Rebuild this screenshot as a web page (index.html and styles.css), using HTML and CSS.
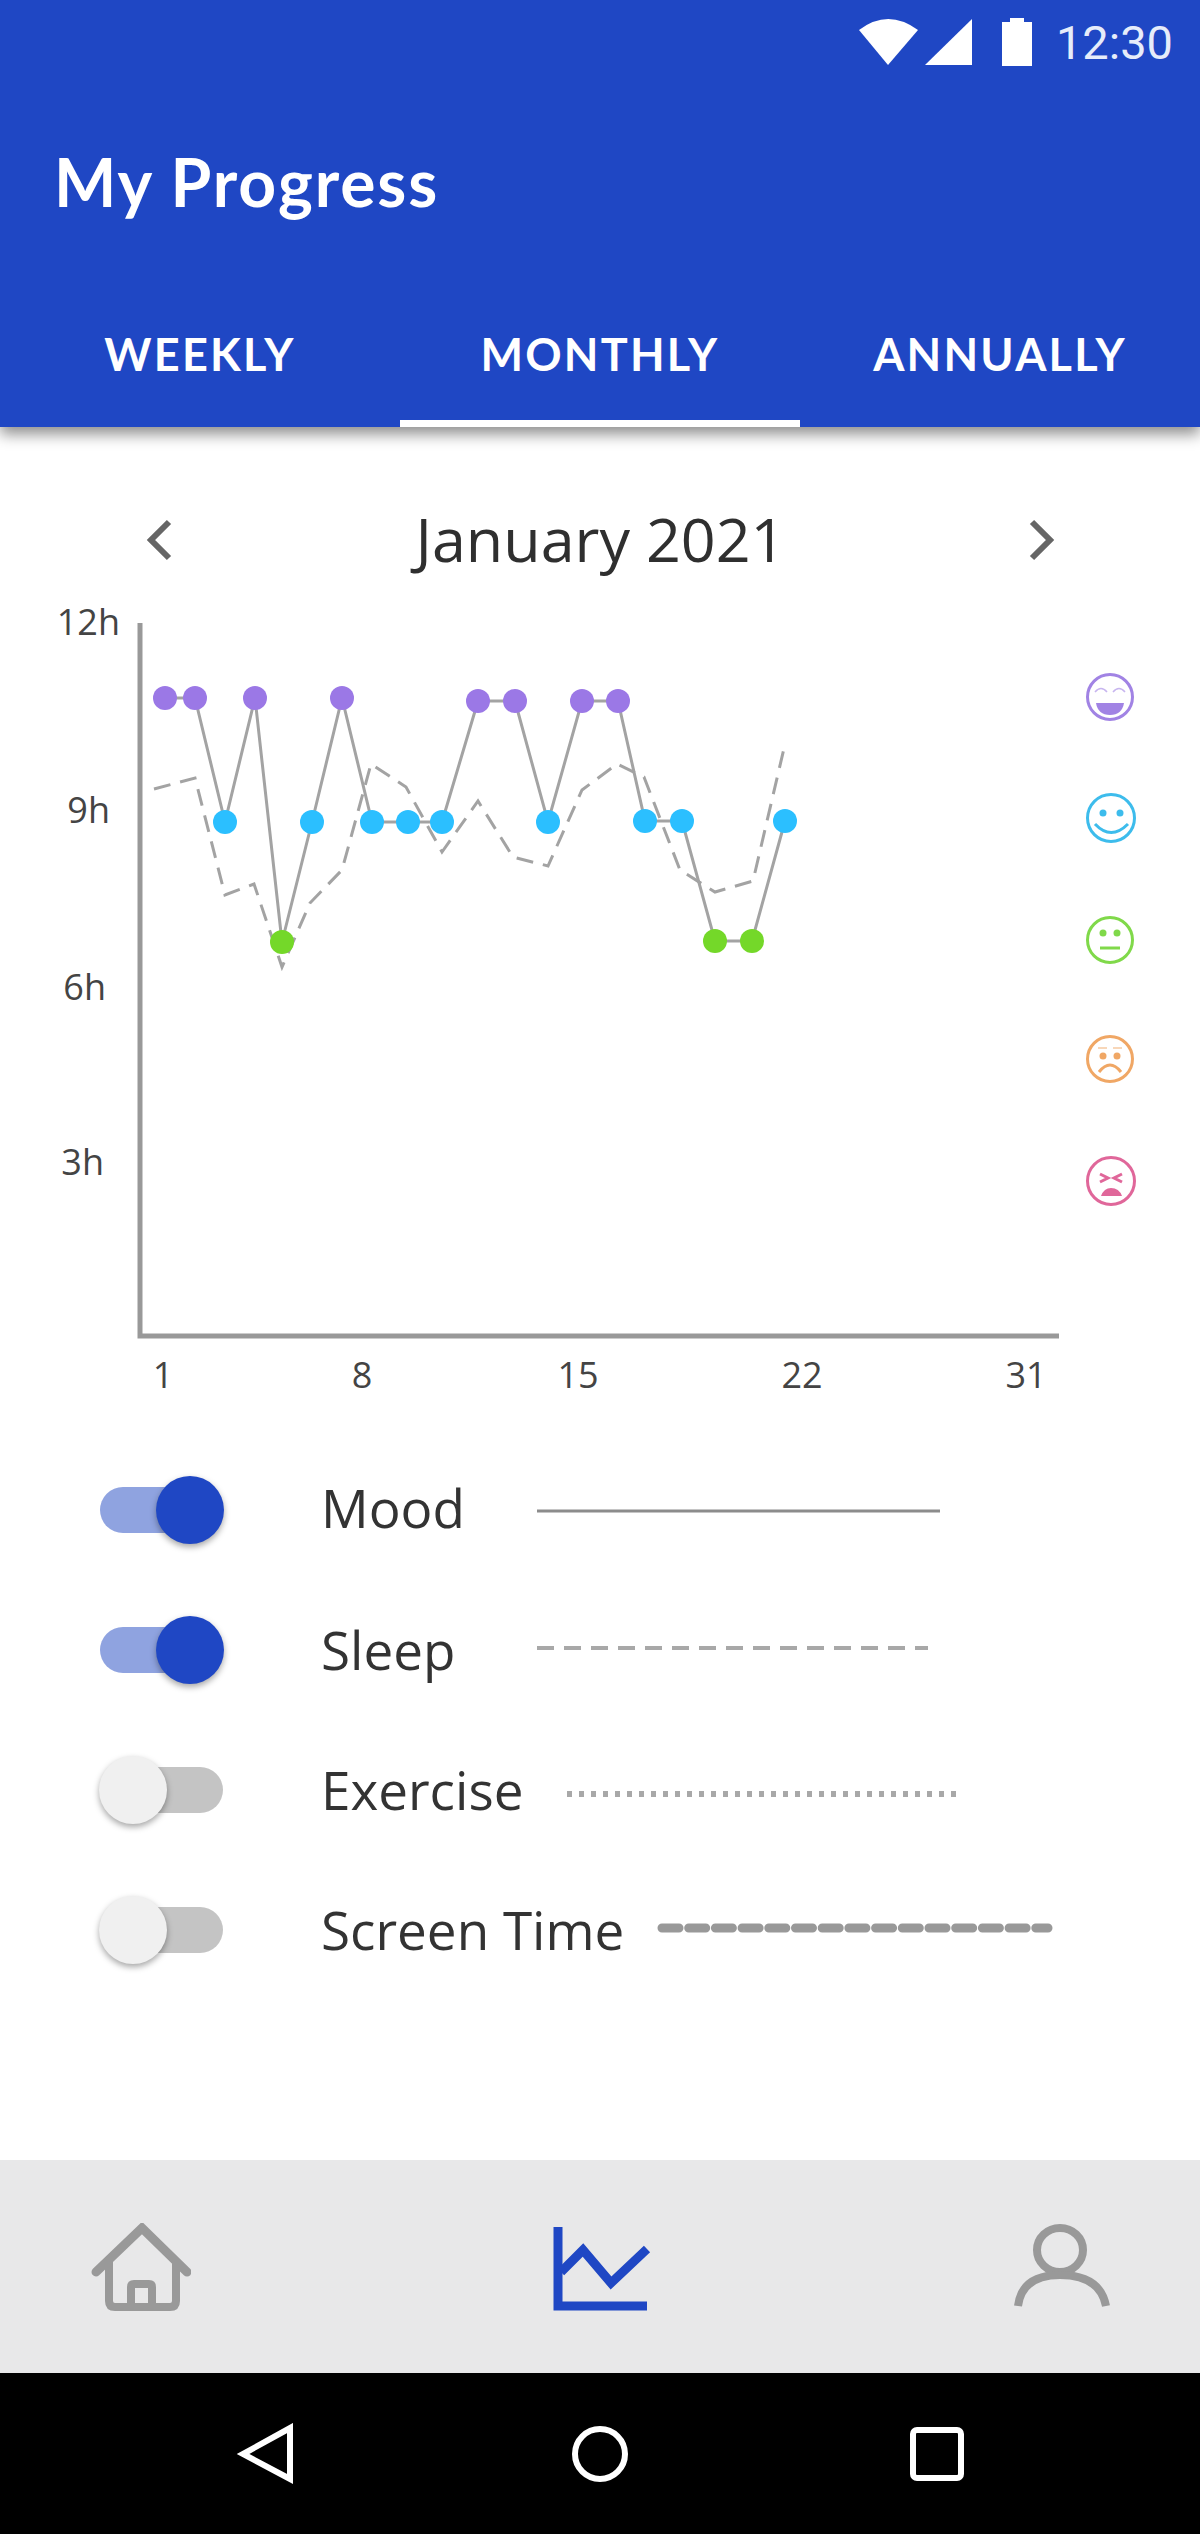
FILE: index.html
```html
<!DOCTYPE html>
<html lang="en">
<head>
    <meta charset="UTF-8">
    <meta name="viewport" content="width=device-width, initial-scale=1.0">
    <title>My Progress</title>
    <link rel="stylesheet" href="styles.css">
</head>
<body>
<div class="phone">

    <header class="appbar">
        <div class="statusbar">
            <svg class="status-icons" width="173" height="50" viewBox="857 15 173 50">
                <path d="M857 28 Q886 6 916 28 L886 63 Z"/>
                <path d="M923 63 L970 17 V63 Z"/>
                <path d="M1000 20 H1008 V16 H1022 V20 H1030 V64 H1000 Z"/>
            </svg>
            <span class="clock">12:30</span>
        </div>
        <h1 class="title">My Progress</h1>
        <nav class="tabs">
            <a class="tab">WEEKLY</a>
            <a class="tab tab-active">MONTHLY</a>
            <a class="tab">ANNUALLY</a>
        </nav>
    </header>

    <main class="content">
        <div class="month-nav">
            <svg class="chevron" width="27" height="42" viewBox="0 0 27 42"><path d="M23 3 L5 21 L23 39"/></svg>
            <span class="month-label">January 2021</span>
            <svg class="chevron" width="27" height="42" viewBox="0 0 27 42"><path d="M4 3 L22 21 L4 39"/></svg>
        </div>

        <!-- chart coordinates are the page coordinates -->
        <svg class="chart" width="1200" height="815" viewBox="0 585 1200 815">
            <g class="axis-label">
                <text x="120" y="635" text-anchor="end">12h</text>
                <text x="110" y="823" text-anchor="end">9h</text>
                <text x="106" y="1000" text-anchor="end">6h</text>
                <text x="104" y="1175" text-anchor="end">3h</text>
                <text x="163" y="1388" text-anchor="middle">1</text>
                <text x="362" y="1388" text-anchor="middle">8</text>
                <text x="578" y="1388" text-anchor="middle">15</text>
                <text x="802" y="1388" text-anchor="middle">22</text>
                <text x="1026" y="1388" text-anchor="middle">31</text>
            </g>
            <path class="axis" d="M140 623 V1336 H1059"/>

            <polyline class="sleep-line" points="154,789 195,778 225,895 254,884 282,967 310,903 342,870 371,764 406,787 442,852 478,801 513,857 548,866 582,790 617,764 644,777 680,870 715,892 753,881 785,744"/>
            <polyline class="mood-line" points="165,698 195,698 225,822 255,698 282,942 312,822 342,698 372,822 408,822 442,822 478,701 515,701 548,822 582,701 618,701 645,821 682,821 715,941 752,941 785,821"/>

            <g class="dots-great">
                <circle cx="165" cy="698" r="12"/><circle cx="195" cy="698" r="12"/>
                <circle cx="255" cy="698" r="12"/><circle cx="342" cy="698" r="12"/>
                <circle cx="478" cy="701" r="12"/><circle cx="515" cy="701" r="12"/>
                <circle cx="582" cy="701" r="12"/><circle cx="618" cy="701" r="12"/>
            </g>
            <g class="dots-good">
                <circle cx="225" cy="822" r="12"/><circle cx="312" cy="822" r="12"/>
                <circle cx="372" cy="822" r="12"/><circle cx="408" cy="822" r="12"/>
                <circle cx="442" cy="822" r="12"/><circle cx="548" cy="822" r="12"/>
                <circle cx="645" cy="821" r="12"/><circle cx="682" cy="821" r="12"/>
                <circle cx="785" cy="821" r="12"/>
            </g>
            <g class="dots-okay">
                <circle cx="282" cy="942" r="12"/><circle cx="715" cy="941" r="12"/>
                <circle cx="752" cy="941" r="12"/>
            </g>

            <g class="face face-great" transform="translate(1110 697)">
                <circle class="ring" r="22.5"/>
                <path class="faint" d="M-15 -5 Q-9 -12 -3 -5 M3 -5 Q9 -12 15 -5"/>
                <path class="fill" d="M-14 6 H14 Q12 18 0 18 Q-12 18 -14 6 Z"/>
            </g>
            <g class="face face-good" transform="translate(1111 818)">
                <circle class="ring" r="23.5"/>
                <circle class="fill" cx="-8" cy="-5" r="3.5"/>
                <circle class="fill" cx="9" cy="-5" r="3.5"/>
                <path class="thin" d="M-16 6 Q0 23 17 6"/>
            </g>
            <g class="face face-okay" transform="translate(1110 940)">
                <circle class="ring" r="22.5"/>
                <circle class="fill" cx="-7" cy="-7" r="3.5"/>
                <circle class="fill" cx="7" cy="-7" r="3.5"/>
                <path class="thin" d="M-10 8 H10"/>
            </g>
            <g class="face face-bad" transform="translate(1110 1059)">
                <circle class="ring" r="22.5"/>
                <path class="faint" d="M-12 -11 H-3 M3 -11 H12"/>
                <circle class="fill" cx="-7" cy="-3" r="3.5"/>
                <circle class="fill" cx="7" cy="-3" r="3.5"/>
                <path class="thin" d="M-11 13 Q0 -1 11 13"/>
            </g>
            <g class="face face-awful" transform="translate(1111 1181)">
                <circle class="ring" r="23.5"/>
                <path class="thin" d="M-11 -7 L-3 -3 L-11 1 M11 -7 L3 -3 L11 1"/>
                <path class="fill" d="M-10 15 Q-7 7 0 7 Q8 7 11 15 Z"/>
            </g>
        </svg>

        <ul class="legend">
            <li class="legend-row">
                <span class="toggle toggle-on"><span class="knob"></span></span>
                <span class="legend-label label-mood">Mood</span>
                <svg class="legend-line line-mood" width="403" height="12"><line x1="0" y1="6" x2="403" y2="6"/></svg>
            </li>
            <li class="legend-row">
                <span class="toggle toggle-on"><span class="knob"></span></span>
                <span class="legend-label label-sleep">Sleep</span>
                <svg class="legend-line line-sleep" width="391" height="12"><line x1="0" y1="6" x2="391" y2="6"/></svg>
            </li>
            <li class="legend-row">
                <span class="toggle"><span class="knob"></span></span>
                <span class="legend-label label-exercise">Exercise</span>
                <svg class="legend-line line-exercise" width="395" height="12"><line x1="0" y1="6" x2="395" y2="6"/></svg>
            </li>
            <li class="legend-row">
                <span class="toggle"><span class="knob"></span></span>
                <span class="legend-label label-screen">Screen Time</span>
                <svg class="legend-line line-screen" width="396" height="12"><line x1="5" y1="6" x2="391" y2="6"/></svg>
            </li>
        </ul>
    </main>

    <nav class="bottom-nav">
        <svg class="nav-icon" width="100" height="88" viewBox="0 0 100 88">
            <path class="roof" d="M5 49 L51 5 L96 49"/>
            <path d="M18 38 V78 Q18 84 24 84 H79 Q85 84 85 78 V38"/>
            <path d="M40 84 V64 Q40 61 43 61 H58 Q61 61 61 64 V84"/>
        </svg>
        <svg class="nav-icon nav-icon-active" width="100" height="88" viewBox="0 0 100 88">
            <path d="M7 4 V83 H96"/>
            <path d="M10 49 L32 27 L60 60 L96 26"/>
        </svg>
        <svg class="nav-icon" width="100" height="88" viewBox="0 0 100 88">
            <ellipse cx="49" cy="27" rx="23" ry="22"/>
            <path d="M7 83 Q11 52 49 52 Q89 52 95 83"/>
        </svg>
    </nav>

    <nav class="system-nav">
        <svg width="60" height="62" viewBox="0 0 60 62"><path d="M54 5 V56 L7 31 Z"/></svg>
        <svg width="60" height="62" viewBox="0 0 60 62"><circle cx="28" cy="31" r="25"/></svg>
        <svg width="60" height="62" viewBox="0 0 60 62"><rect x="6" y="7" width="48" height="48" rx="4"/></svg>
    </nav>

</div>
</body>
</html>
```

FILE: styles.css
```css
* {
    box-sizing: border-box;
}
body {
    margin: 0;
    background-color: #ffffff;
    font-family: "Open Sans", sans-serif;
    color: #333333;
}
.phone {
    width: 1200px;
    height: 2534px;
    display: flex;
    flex-direction: column;
    overflow: hidden;
}

/* app bar */
.appbar {
    position: relative;
    z-index: 1;
    background-color: #1f47c4;
    color: #ffffff;
    box-shadow: 0 7px 14px rgba(0, 0, 0, 0.45);
}
.statusbar {
    height: 84px;
    display: flex;
    justify-content: flex-end;
    align-items: center;
    padding-right: 27px;
}
.status-icons {
    fill: #ffffff;
}
.clock {
    margin-left: 24px;
    font-family: Roboto, sans-serif;
    font-size: 47px;
    color: #e6ecfa;
}
.title {
    height: 196px;
    margin: 0;
    padding: 0 0 2px 54px;
    display: flex;
    align-items: center;
    font-family: Lato, sans-serif;
    font-size: 66px;
    font-weight: 700;
    letter-spacing: 1.9px;
}
.tabs {
    display: flex;
}
.tab {
    flex: 1;
    height: 147px;
    display: flex;
    align-items: center;
    justify-content: center;
    padding-top: 7px;
    border-bottom: 7px solid transparent;
    font-family: Lato, sans-serif;
    font-size: 45px;
    font-weight: 700;
    letter-spacing: 2.2px;
}
.tab-active {
    border-bottom-color: #ffffff;
}

/* month + chart */
.content {
    flex: 1;
}
.month-nav {
    height: 158px;
    padding: 68px 145px 0 146px;
    display: flex;
    justify-content: space-between;
    align-items: center;
}
.chevron path {
    fill: none;
    stroke: #666666;
    stroke-width: 6;
}
.month-label {
    margin-bottom: 4px;
    font-size: 61px;
    color: #2f2f2f;
}
.chart {
    display: block;
}
.axis-label {
    font-family: "Open Sans", sans-serif;
    font-size: 36px;
    fill: #444444;
}
.axis {
    fill: none;
    stroke: #999999;
    stroke-width: 5;
}
.mood-line, .sleep-line {
    fill: none;
    stroke: #a3a3a3;
    stroke-width: 3;
}
.sleep-line {
    stroke-dasharray: 17 10;
}
.dots-great { fill: #9b78e6; }
.dots-good { fill: #2bbfff; }
.dots-okay { fill: #74d829; }

.face { --face: #999999; }
.face-great { --face: #a183e4; }
.face-good { --face: #3dbcec; }
.face-okay { --face: #80d94a; }
.face-bad { --face: #f0a765; }
.face-awful { --face: #e0679a; }
.face .ring, .face .thin, .face .faint {
    fill: none;
    stroke: var(--face);
    stroke-width: 3;
}
.face .faint {
    stroke-width: 1.5;
    opacity: 0.6;
}
.face .fill {
    fill: var(--face);
}

/* legend */
.legend {
    list-style: none;
    margin: 40px 0 0;
    padding: 0 0 0 100px;
}
.legend-row {
    height: 140px;
    display: flex;
    align-items: center;
}
.toggle {
    position: relative;
    width: 123px;
    height: 46px;
    margin-right: 98px;
    border-radius: 23px;
    background-color: #c4c4c4;
}
.knob {
    position: absolute;
    left: -1px;
    top: -11px;
    width: 68px;
    height: 68px;
    border-radius: 50%;
    background-color: #f0f0f0;
    box-shadow: 0 3px 6px rgba(0, 0, 0, 0.35);
}
.toggle-on {
    background-color: #8fa3e0;
}
.toggle-on .knob {
    left: auto;
    right: -1px;
    background-color: #1f47c4;
}
.legend-label {
    margin-bottom: 2px;
    font-size: 53px;
    color: #333333;
    white-space: nowrap;
}
.label-mood {
    width: 216px;
    margin-bottom: 6px;
}
.label-sleep { width: 216px; }
.label-exercise { width: 246px; }
.label-screen { width: 336px; }
.legend-line {
    stroke: #a8a8a8;
}
.line-mood {
    margin-top: 2px;
    stroke: #8c8c8c;
    stroke-width: 3;
}
.line-sleep {
    margin-bottom: 4px;
    stroke-width: 4;
    stroke-dasharray: 17 10;
}
.line-exercise {
    margin-top: 8px;
    stroke-width: 6;
    stroke-dasharray: 5 7;
}
.line-screen {
    margin-bottom: 4px;
    stroke: #999999;
    stroke-width: 9;
    stroke-linecap: round;
    stroke-dasharray: 17 9.7;
}

/* bottom navigation */
.bottom-nav {
    height: 213px;
    padding: 0 89px 0 91px;
    display: flex;
    justify-content: space-between;
    align-items: center;
    background-color: #e8e8e9;
}
.nav-icon {
    fill: none;
    stroke: #999999;
    stroke-width: 8;
}
.nav-icon .roof {
    stroke-width: 9;
    stroke-linecap: round;
}
.nav-icon-active {
    stroke: #1f47c4;
    stroke-width: 9;
}
.system-nav {
    height: 161px;
    padding: 0 233px 0 236px;
    display: flex;
    justify-content: space-between;
    align-items: center;
    background-color: #000000;
}
.system-nav svg {
    fill: none;
    stroke: #ffffff;
    stroke-width: 6;
}
```
